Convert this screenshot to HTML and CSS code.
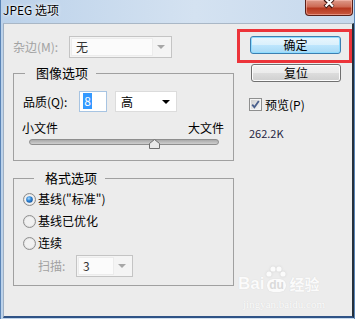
FILE: index.html
```html
<!DOCTYPE html>
<html lang="zh-CN">
<head>
  <meta charset="UTF-8">
  <meta name="viewport" content="width=device-width, initial-scale=1.0">
  <title>JPEG 选项</title>
  <link rel="stylesheet" href="styles.css">
</head>
<body>
  <div class="window">
    <div class="titlebar">
      <span class="title">JPEG 选项</span>
      <span class="close">
        <svg width="48" height="16" viewBox="0 0 48 16">
          <path d="M20 0 L24 4 L28 0 M20 8 L28 0 M20 0 L28 8" stroke="#3a1410" stroke-width="4" fill="none"/>
          <path d="M20.5 0 L28 7.5 M28 0 L20.5 7.5" stroke="#ffffff" stroke-width="2.2" fill="none"/>
        </svg>
      </span>
    </div>

    <div class="client">
      <div class="left">
        <div class="row matte">
          <span class="lbl muted">杂边(M):</span>
          <div class="select disabled matte-select">
            <span class="field">无</span>
            <i class="arrow"></i>
          </div>
        </div>

        <fieldset class="group image-group">
          <legend>图像选项</legend>
          <div class="row quality">
            <span class="lbl">品质(Q):</span>
            <div class="input"><span class="sel">8</span></div>
            <div class="select quality-select">
              <span class="field">高</span>
              <i class="arrow"></i>
            </div>
          </div>
          <div class="size-labels">
            <span>小文件</span>
            <span>大文件</span>
          </div>
          <div class="slider">
            <div class="track"></div>
            <svg class="thumb" width="11" height="10" viewBox="0 0 11 10">
              <path d="M0.5 9.5 L0.5 4.5 L5.5 0.5 L10.5 4.5 L10.5 9.5 Z" fill="#e9e9e9" stroke="#6f6f6f"/>
            </svg>
          </div>
        </fieldset>

        <fieldset class="group format-group">
          <legend>格式选项</legend>
          <div class="radio-row">
            <svg class="radio" width="13" height="13" viewBox="0 0 13 13">
              <defs>
                <radialGradient id="dot" cx="0.4" cy="0.35" r="0.7">
                  <stop offset="0" stop-color="#a9dbff"/>
                  <stop offset="0.5" stop-color="#2f86d6"/>
                  <stop offset="1" stop-color="#16539b"/>
                </radialGradient>
              </defs>
              <circle cx="6.5" cy="6.5" r="6" fill="#e6e6e6" stroke="#8a8a8a"/>
              <circle cx="6.5" cy="6.5" r="4.6" fill="#f4f4f4"/>
              <circle cx="6.5" cy="6.5" r="3.3" fill="url(#dot)"/>
            </svg>
            <span>基线("标准")</span>
          </div>
          <div class="radio-row">
            <svg class="radio" width="13" height="13" viewBox="0 0 13 13">
              <circle cx="6.5" cy="6.5" r="6" fill="#e3e3e3" stroke="#8f8f8f"/>
              <circle cx="6.5" cy="6.5" r="4.6" fill="#f1f1f1"/>
            </svg>
            <span>基线已优化</span>
          </div>
          <div class="radio-row">
            <svg class="radio" width="13" height="13" viewBox="0 0 13 13">
              <circle cx="6.5" cy="6.5" r="6" fill="#e3e3e3" stroke="#8f8f8f"/>
              <circle cx="6.5" cy="6.5" r="4.6" fill="#f1f1f1"/>
            </svg>
            <span>连续</span>
          </div>
          <div class="row scan">
            <span class="lbl muted">扫描:</span>
            <div class="select disabled scan-select">
              <span class="field">3</span>
              <i class="arrow"></i>
            </div>
          </div>
        </fieldset>
      </div>

      <div class="right">
        <div class="highlight">
          <div class="btn default">确定</div>
        </div>
        <div class="btn reset">复位</div>
        <div class="check-row">
          <svg class="check" width="13" height="13" viewBox="0 0 13 13">
            <defs>
              <linearGradient id="cb" x1="0" y1="0" x2="1" y2="1">
                <stop offset="0" stop-color="#cfcfcf"/>
                <stop offset="1" stop-color="#f6f6f6"/>
              </linearGradient>
            </defs>
            <rect x="0.5" y="0.5" width="12" height="12" fill="#f4f4f4" stroke="#8e8f8f"/>
            <rect x="2" y="2" width="9" height="9" fill="url(#cb)"/>
            <path d="M3.2 6.6 L5.4 9.2 L9.8 3" stroke="#4a5f8c" stroke-width="1.8" fill="none"/>
          </svg>
          <span>预览(P)</span>
        </div>
        <div class="filesize">262.2K</div>
      </div>

      <div class="watermark">
        <div class="wm-logo">
          <span class="wm-bai">Bai</span>
          <span class="wm-paw">
            <svg width="22" height="14" viewBox="0 0 22 14">
              <circle cx="4" cy="9" r="2.6" fill="#fbfbfb"/>
              <circle cx="8" cy="4" r="2.6" fill="#fbfbfb"/>
              <circle cx="14" cy="4" r="2.6" fill="#fbfbfb"/>
              <circle cx="18" cy="9" r="2.6" fill="#fbfbfb"/>
            </svg>
            <span class="wm-du">du</span>
          </span>
          <span class="wm-cn">经验</span>
        </div>
        <div class="wm-url">jingyan.baidu.com</div>
      </div>
    </div>
  </div>
</body>
</html>
```

FILE: styles.css
```css
* {
  box-sizing: border-box;
}
body {
  margin: 0;
  font-family: "Noto Sans CJK SC", "Noto Sans", sans-serif;
  font-size: 12px;
  line-height: 16px;
  color: #000;
}
.window {
  width: 355px;
  height: 319px;
  display: flex;
  flex-direction: column;
  background: linear-gradient(90deg, #bcd2ea, #d4e2f1 55%, #c6d9ed);
  border-left: 1px solid #5a84b6;
  border-right: 1px solid #5a86b8;
  overflow: hidden;
}
.titlebar {
  height: 23px;
  display: flex;
  justify-content: space-between;
  align-items: flex-start;
  padding-left: 2px;
}
.title {
  margin-top: 2px;
  font-size: 12px;
  text-shadow: 0 0 4px #fff, 0 0 2px #fff;
}
.close {
  width: 48px;
  height: 16px;
  margin-right: 1px;
  border: 1px solid #5a2018;
  border-top: none;
  border-radius: 0 0 4px 4px;
  background: linear-gradient(#dd9b8b 0%, #cd6a54 45%, #b6381f 55%, #c95a40 100%);
  box-shadow: inset 0 0 0 1px rgba(255, 200, 190, 0.5);
  overflow: hidden;
}
.close svg {
  display: block;
  margin: -1px 0 0 -1px;
}

.client {
  flex: 1;
  margin: 0 0 1px 2px;
  display: flex;
  position: relative;
  background: #ececec;
  border-top: 1px solid #a9b7c6;
  border-left: 1px solid #9fb0c3;
  border-right: 2px solid #25303c;
  border-bottom: 2px solid #2f5386;
}

/* left column */
.left {
  width: 221px;
  margin: 12px 0 0 9px;
}
.row {
  display: flex;
  align-items: center;
}
.lbl.muted {
  color: #a2a2a2;
}
.matte {
  height: 22px;
}
.matte .lbl {
  width: 56px;
}
.select {
  height: 22px;
  display: flex;
  align-items: center;
  justify-content: space-between;
  background: #fff;
  border: 1px solid #d6d6d6;
  padding: 0 6px 0 5px;
}
.select.disabled {
  background: #f4f4f4;
  border-color: #c4c4c4;
}
.select.disabled .field {
  background: #fbfbfb;
  border: 1px solid #ececec;
  margin-left: -4px;
  padding-left: 4px;
  height: 18px;
  line-height: 16px;
  color: #333;
}
.matte-select {
  width: 103px;
}
.matte-select .field {
  width: 82px;
}
.arrow {
  width: 0;
  height: 0;
  border-left: 4px solid transparent;
  border-right: 4px solid transparent;
  border-top: 4px solid #000;
}
.select.disabled .arrow {
  border-top-color: #a7a7a7;
}

.group {
  margin: 0;
  padding: 0;
  min-width: 0;
  border: 1px solid #a0a0a0;
}
.group legend {
  margin-left: 11px;
  padding: 0 8px 0 11px;
  font-size: 13px;
  line-height: 16px;
}
.image-group {
  margin-top: 7px;
  padding-bottom: 11px;
}
.quality {
  height: 21px;
  margin: 10px 0 0 9px;
}
.quality .lbl {
  width: 56px;
}
.input {
  width: 28px;
  height: 21px;
  border: 1px solid #a7c4e2;
  background: #fff;
  padding: 1px 0 0 3px;
}
.input .sel {
  display: inline-block;
  width: 9px;
  height: 16px;
  background: #3399ff;
  color: #fff;
  text-align: center;
}
.quality-select {
  width: 62px;
  height: 21px;
  margin-left: 8px;
  border-color: #dcdcdc;
}
.quality-select .arrow {
  border-left-width: 4px;
  border-right-width: 4px;
  border-top-width: 4px;
}
.size-labels {
  display: flex;
  justify-content: space-between;
  margin: 8px 0 0;
  padding: 0 9px 0 8px;
}
.slider {
  position: relative;
  height: 10px;
  margin: 0 14px 0 15px;
}
.track {
  margin-top: 3px;
  height: 6px;
  border-radius: 3px;
  border: 1px solid #8e8e8e;
  background: linear-gradient(#a9a9a9, #cfcfcf);
}
.thumb {
  position: absolute;
  left: 120px;
  top: 0;
}

.format-group {
  margin-top: 9px;
  padding: 2px 0 8px 9px;
}
.radio-row {
  height: 22px;
  display: flex;
  align-items: center;
  gap: 2px;
}
.scan {
  height: 22px;
  margin: 1px 0 0 15px;
}
.scan .lbl {
  width: 38px;
}
.scan-select {
  width: 57px;
}
.scan-select .field {
  width: 36px;
  color: #5a3a14;
}

/* right column */
.right {
  width: 115px;
  margin: 5px 0 0 3px;
}
.highlight {
  height: 34px;
  border: 3px solid #ec343a;
  padding: 4px 0 0 10px;
}
.btn {
  height: 18px;
  display: flex;
  align-items: center;
  justify-content: center;
  border: 1px solid #707070;
  border-radius: 3px;
  background: linear-gradient(#f2f2f2 0%, #ebebeb 50%, #dddddd 50%, #cfcfcf 100%);
  box-shadow: inset 0 0 0 1px #fcfcfc;
}
.btn.default {
  width: 91px;
  border-color: #3c7fb1;
  background: linear-gradient(#eaf6fd 0%, #d9f0fc 50%, #bee6fd 50%, #a7d9f5 100%);
  box-shadow: inset 0 0 0 1px #8fdcff;
}
.btn.reset {
  width: 90px;
  margin: 1px 0 0 14px;
}
.check-row {
  display: flex;
  align-items: center;
  gap: 3px;
  height: 13px;
  margin: 16px 0 0 12px;
}
.check {
  flex: none;
}
.filesize {
  margin: 14px 0 0 12px;
  font-size: 11px;
  color: #1f2340;
}

/* watermark */
.watermark {
  position: absolute;
  left: 234px;
  top: 238px;
  width: 92px;
  color: #fbfbfb;
  text-shadow: 0 0 1px #d2d2d2;
}
.wm-logo {
  display: flex;
  align-items: flex-end;
  height: 30px;
}
.wm-bai {
  font-family: "Liberation Sans", sans-serif;
  font-weight: bold;
  font-size: 17px;
  line-height: 16px;
}
.wm-paw {
  display: flex;
  flex-direction: column;
  align-items: center;
  width: 24px;
}
.wm-paw svg {
  filter: drop-shadow(0 0 1px #cfcfcf);
}
.wm-du {
  background: #fbfbfb;
  color: #dadada;
  text-shadow: none;
  border-radius: 6px;
  font-family: "Liberation Sans", sans-serif;
  font-weight: bold;
  font-size: 12px;
  line-height: 13px;
  padding: 0 2px;
  box-shadow: 0 0 1px #cfcfcf;
}
.wm-cn {
  font-weight: bold;
  font-size: 15px;
  line-height: 16px;
  margin-left: 1px;
}
.wm-url {
  margin-top: 6px;
  font-family: "Liberation Serif", serif;
  font-size: 11px;
  line-height: 12px;
  text-align: center;
}
```
